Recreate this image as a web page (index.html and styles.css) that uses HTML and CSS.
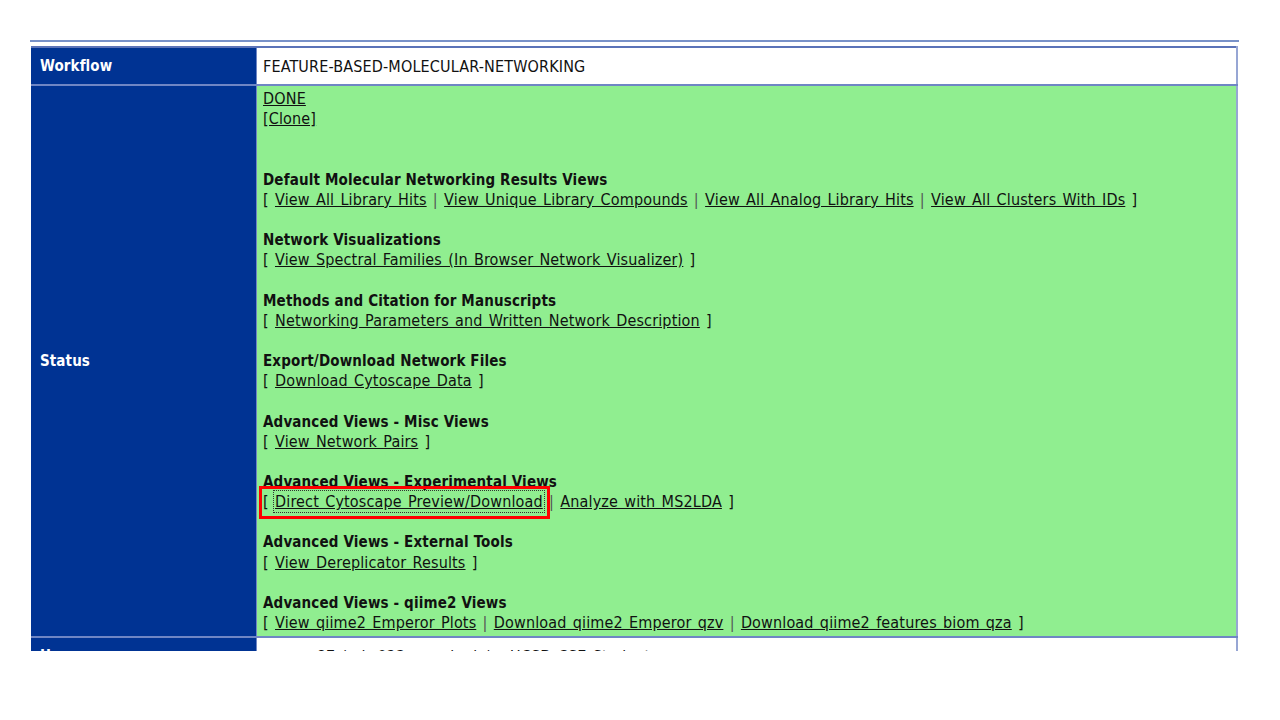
FILE: index.html
```html
<!DOCTYPE html>
<html>
<head>
<meta charset="utf-8">
<link rel="stylesheet" href="styles.css">
</head>
<body>
<div class="page">
  <div class="rule"></div>
  <div class="clip">
    <table class="info">
      <tr class="row-workflow">
        <th>Workflow</th>
        <td class="plain">FEATURE-BASED-MOLECULAR-NETWORKING</td>
      </tr>
      <tr class="row-status">
        <th>Status</th>
        <td class="green">
          <div class="line"><a href="#">DONE</a></div>
          <div class="line"><a href="#">[Clone]</a></div>
          <div class="line">&nbsp;</div>
          <div class="line">&nbsp;</div>

          <div class="line head">Default Molecular Networking Results Views</div>
          <div class="line">[ <a href="#">View All Library Hits</a> <span class="sep">|</span> <a href="#">View Unique Library Compounds</a> <span class="sep">|</span> <a href="#">View All Analog Library Hits</a> <span class="sep">|</span> <a href="#">View All Clusters With IDs</a> ]</div>
          <div class="line">&nbsp;</div>

          <div class="line head">Network Visualizations</div>
          <div class="line">[ <a href="#">View Spectral Families (In Browser Network Visualizer)</a> ]</div>
          <div class="line">&nbsp;</div>

          <div class="line head">Methods and Citation for Manuscripts</div>
          <div class="line">[ <a href="#">Networking Parameters and Written Network Description</a> ]</div>
          <div class="line">&nbsp;</div>

          <div class="line head">Export/Download Network Files</div>
          <div class="line">[ <a href="#">Download Cytoscape Data</a> ]</div>
          <div class="line">&nbsp;</div>

          <div class="line head">Advanced Views - Misc Views</div>
          <div class="line">[ <a href="#">View Network Pairs</a> ]</div>
          <div class="line">&nbsp;</div>

          <div class="line head">Advanced Views - Experimental Views</div>
          <div class="line"><span class="marked">[ <a href="#" class="focused">Direct Cytoscape Preview/Download</a><span class="redbox"></span></span> <span class="sep">|</span> <a href="#">Analyze with MS2LDA</a> ]</div>
          <div class="line">&nbsp;</div>

          <div class="line head">Advanced Views - External Tools</div>
          <div class="line">[ <a href="#">View Dereplicator Results</a> ]</div>
          <div class="line">&nbsp;</div>

          <div class="line head">Advanced Views - qiime2 Views</div>
          <div class="line">[ <a href="#">View qiime2 Emperor Plots</a> <span class="sep">|</span> <a href="#">Download qiime2 Emperor qzv</a> <span class="sep">|</span> <a href="#">Download qiime2 features biom qza</a> ]</div>
        </td>
      </tr>
      <tr class="row-user">
        <th>User</th>
        <td class="plain">mwang87 (miw023@ucsd.edu) - UCSD CSE Student</td>
      </tr>
    </table>
  </div>
</div>
</body>
</html>
```

FILE: styles.css
```css
html, body {
  margin: 0;
  padding: 0;
  background: #ffffff;
}

body {
  font-family: "DejaVu Sans Condensed", "DejaVu Sans", Verdana, sans-serif;
  font-size: 16px;
  color: #111111;
}

.page {
  padding-top: 40px;
  padding-left: 30px;
  width: 1209px;
}

.rule {
  height: 2px;
  background: #7891c8;
  margin-bottom: 4px;
}

.clip {
  height: 605px;
  overflow: hidden;
  padding-left: 1px;
}

.info {
  width: 1207px;
  border-collapse: collapse;
  border-top: 2px solid #5b73b8;
  border-right: 2px solid #97a6d4;
}

.info th,
.info td {
  border: 1px solid #6f86c4;
  border-width: 0 0 2px 0;
}

.info th {
  width: 207px;
  background: #003393;
  color: #ffffff;
  font-weight: bold;
  font-size: 15px;
  letter-spacing: 0.1px;
  text-align: left;
  padding: 0 9px;
  vertical-align: middle;
  border-right: 1px solid #6f86c4;
}

.info td.plain {
  background: #ffffff;
  padding: 0 6px;
  height: 36px;
  vertical-align: middle;
  letter-spacing: 0.15px;
  word-spacing: 1.5px;
}

.info td.green {
  background: #90ee90;
  padding: 3px 6px 3px 6px;
  vertical-align: top;
}

.line {
  line-height: 20.15px;
  white-space: nowrap;
  letter-spacing: 0.15px;
  word-spacing: 1.5px;
}

.head {
  font-weight: bold;
  font-size: 15px;
  letter-spacing: 0.15px;
  word-spacing: 0;
}

a {
  color: #111111;
  text-decoration: underline;
}

.sep {
  color: #555555;
}

.marked {
  position: relative;
}

.focused {
  outline: 1px dotted #333333;
  outline-offset: 1px;
}

.redbox {
  position: absolute;
  left: -4px;
  right: -7px;
  top: -6px;
  bottom: -8px;
  border: 3px solid #ff0000;
  pointer-events: none;
}
```
